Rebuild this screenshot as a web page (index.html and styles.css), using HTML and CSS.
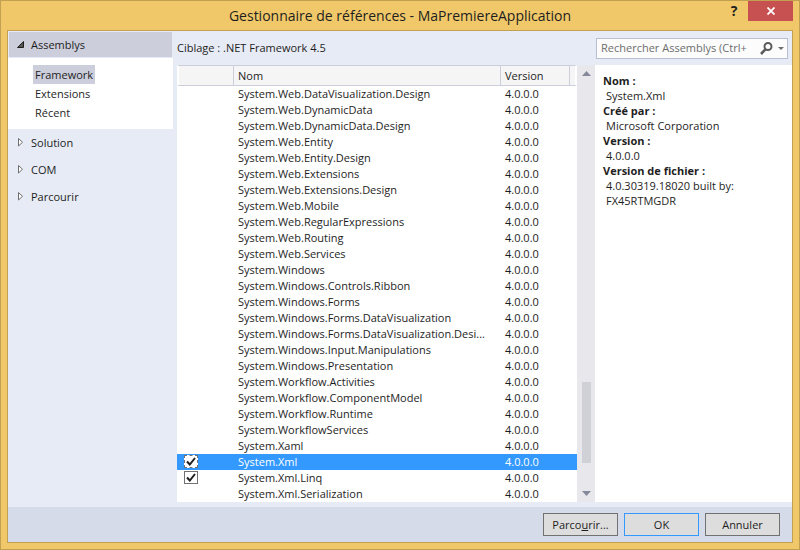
FILE: index.html
```html
<!DOCTYPE html>
<html lang="fr">
<head>
    <meta charset="UTF-8">
    <title>Gestionnaire de références - MaPremiereApplication</title>
    <link rel="stylesheet" href="styles.css">
</head>
<body>
    <div class="window">
        <header class="title-bar">
            <h1 class="title">Gestionnaire de références - MaPremiereApplication</h1>
            <div class="title-actions">
                <button class="help-btn" type="button" aria-label="Aide">?</button>
                <button class="close-btn" type="button" aria-label="Fermer">
                    <svg width="8" height="8" viewBox="0 0 8 8"><path d="M0.5 0.5L7.5 7.5M7.5 0.5L0.5 7.5" stroke="#fff" stroke-width="1.8"/></svg>
                </button>
            </div>
        </header>

        <div class="client">
            <div class="content">
                <nav class="sidebar">
                    <button class="section section-open" type="button">
                        <svg width="7" height="7" viewBox="0 0 7 7"><path d="M6.5 0.5V6.5H0.5Z" fill="#555" stroke="#1e1e1e"/></svg>
                        Assemblys
                    </button>
                    <ul class="sub-list">
                        <li><a class="sub-link active" href="#framework">Framework</a></li>
                        <li><a class="sub-link" href="#extensions">Extensions</a></li>
                        <li><a class="sub-link" href="#recent">Récent</a></li>
                    </ul>
                    <button class="section" type="button">
                        <svg width="7" height="9" viewBox="0 0 7 9"><path d="M1.5 0.5V8L5.5 4.25Z" fill="#fff" stroke="#6e6e6e"/></svg>
                        Solution
                    </button>
                    <button class="section" type="button">
                        <svg width="7" height="9" viewBox="0 0 7 9"><path d="M1.5 0.5V8L5.5 4.25Z" fill="#fff" stroke="#6e6e6e"/></svg>
                        COM
                    </button>
                    <button class="section" type="button">
                        <svg width="7" height="9" viewBox="0 0 7 9"><path d="M1.5 0.5V8L5.5 4.25Z" fill="#fff" stroke="#6e6e6e"/></svg>
                        Parcourir
                    </button>
                </nav>

                <main class="main">
                    <div class="toolbar">
                        <span class="target">Ciblage : .NET Framework 4.5</span>
                        <div class="search">
                            <input class="search-input" type="text" placeholder="Rechercher Assemblys (Ctrl+" aria-label="Rechercher Assemblys">
                            <button class="search-btn" type="button" aria-label="Rechercher">
                                <svg width="13" height="13" viewBox="0 0 13 13" fill="none" stroke="#5a5a5a"><circle cx="8" cy="4.5" r="3.5" stroke-width="2"/><path d="M5.4 7.4L1 12" stroke-width="2.6"/></svg>
                            </button>
                            <button class="search-btn" type="button" aria-label="Options de recherche">
                                <svg width="6" height="3" viewBox="0 0 6 3"><path d="M0 0H6L3 3Z" fill="#6e6e6e"/></svg>
                            </button>
                        </div>
                    </div>

                    <div class="panes">
                        <div class="list">
                            <table class="assemblies">
                                <colgroup>
                                    <col class="col-check">
                                    <col class="col-name">
                                    <col class="col-version">
                                    <col class="col-end">
                                </colgroup>
                                <thead>
                                    <tr><th></th><th>Nom</th><th>Version</th><th></th></tr>
                                </thead>
                                <tbody>
                                    <tr><td></td><td>System.Web.DataVisualization.Design</td><td>4.0.0.0</td><td></td></tr>
                                    <tr><td></td><td>System.Web.DynamicData</td><td>4.0.0.0</td><td></td></tr>
                                    <tr><td></td><td>System.Web.DynamicData.Design</td><td>4.0.0.0</td><td></td></tr>
                                    <tr><td></td><td>System.Web.Entity</td><td>4.0.0.0</td><td></td></tr>
                                    <tr><td></td><td>System.Web.Entity.Design</td><td>4.0.0.0</td><td></td></tr>
                                    <tr><td></td><td>System.Web.Extensions</td><td>4.0.0.0</td><td></td></tr>
                                    <tr><td></td><td>System.Web.Extensions.Design</td><td>4.0.0.0</td><td></td></tr>
                                    <tr><td></td><td>System.Web.Mobile</td><td>4.0.0.0</td><td></td></tr>
                                    <tr><td></td><td>System.Web.RegularExpressions</td><td>4.0.0.0</td><td></td></tr>
                                    <tr><td></td><td>System.Web.Routing</td><td>4.0.0.0</td><td></td></tr>
                                    <tr><td></td><td>System.Web.Services</td><td>4.0.0.0</td><td></td></tr>
                                    <tr><td></td><td>System.Windows</td><td>4.0.0.0</td><td></td></tr>
                                    <tr><td></td><td>System.Windows.Controls.Ribbon</td><td>4.0.0.0</td><td></td></tr>
                                    <tr><td></td><td>System.Windows.Forms</td><td>4.0.0.0</td><td></td></tr>
                                    <tr><td></td><td>System.Windows.Forms.DataVisualization</td><td>4.0.0.0</td><td></td></tr>
                                    <tr><td></td><td>System.Windows.Forms.DataVisualization.Desi...</td><td>4.0.0.0</td><td></td></tr>
                                    <tr><td></td><td>System.Windows.Input.Manipulations</td><td>4.0.0.0</td><td></td></tr>
                                    <tr><td></td><td>System.Windows.Presentation</td><td>4.0.0.0</td><td></td></tr>
                                    <tr><td></td><td>System.Workflow.Activities</td><td>4.0.0.0</td><td></td></tr>
                                    <tr><td></td><td>System.Workflow.ComponentModel</td><td>4.0.0.0</td><td></td></tr>
                                    <tr><td></td><td>System.Workflow.Runtime</td><td>4.0.0.0</td><td></td></tr>
                                    <tr><td></td><td>System.WorkflowServices</td><td>4.0.0.0</td><td></td></tr>
                                    <tr><td></td><td>System.Xaml</td><td>4.0.0.0</td><td></td></tr>
                                    <tr class="selected"><td><input class="check" type="checkbox" id="xml" checked></td><td><label for="xml">System.Xml</label></td><td>4.0.0.0</td><td></td></tr>
                                    <tr><td><input class="check" type="checkbox" id="linq" checked></td><td><label for="linq">System.Xml.Linq</label></td><td>4.0.0.0</td><td></td></tr>
                                    <tr><td></td><td>System.Xml.Serialization</td><td>4.0.0.0</td><td></td></tr>
                                </tbody>
                            </table>
                        </div>

                        <div class="scrollbar">
                            <svg width="9" height="5" viewBox="0 0 9 5"><path d="M0 5L4.5 0L9 5Z" fill="#868999"/></svg>
                            <div class="track"><div class="thumb"></div></div>
                            <svg width="9" height="5" viewBox="0 0 9 5"><path d="M0 0L4.5 5L9 0Z" fill="#868999"/></svg>
                        </div>

                        <dl class="details">
                            <dt>Nom :</dt>
                            <dd>System.Xml</dd>
                            <dt>Créé par :</dt>
                            <dd>Microsoft Corporation</dd>
                            <dt>Version :</dt>
                            <dd>4.0.0.0</dd>
                            <dt>Version de fichier :</dt>
                            <dd>4.0.30319.18020 built by:<br>FX45RTMGDR</dd>
                        </dl>
                    </div>
                </main>
            </div>

            <footer class="footer">
                <button class="btn" type="button">Parco<u>u</u>rir...</button>
                <button class="btn btn-default" type="button">OK</button>
                <button class="btn" type="button">Annuler</button>
            </footer>
        </div>
    </div>
</body>
</html>
```
FILE: styles.css
```css
:root {
    --frame: #f0c869;
    --frame-border: #c1a052;
    --panel: #e6ebf5;
    --footer: #d6dbe9;
    --active: #cccedb;
    --selection: #3399ff;
    --text: #1e1e1e;
}

* {
    box-sizing: border-box;
}

body {
    margin: 0;
    font-family: "Open Sans", "Noto Sans", sans-serif;
    font-size: 11px;
    line-height: 16px;
    color: var(--text);
}

button,
input {
    font: inherit;
    color: inherit;
}

button {
    padding: 0;
    border: none;
    background: none;
}

svg {
    display: block;
    flex-shrink: 0;
}

.window {
    display: flex;
    flex-direction: column;
    min-height: 100vh;
    padding: 0 6px 6px;
    border: 1px solid var(--frame-border);
    background-color: var(--frame);
}

/* Title bar */
.title-bar {
    display: grid;
    grid-template-columns: 1fr auto 1fr;
    height: 29px;
}

.title {
    grid-column: 2;
    margin: 0;
    font-size: 14px;
    font-weight: 400;
    line-height: 29px;
}

.title-actions {
    display: flex;
    justify-content: flex-end;
    align-items: flex-start;
}

.help-btn {
    width: 28px;
    height: 20px;
    font-size: 14px;
    font-weight: 700;
}

.close-btn {
    display: flex;
    justify-content: center;
    align-items: center;
    width: 45px;
    height: 20px;
    background-color: #c75050;
}

.client {
    display: flex;
    flex-direction: column;
    flex: 1;
    border: 1px solid var(--frame-border);
    background-color: var(--panel);
}

.content {
    display: flex;
    flex: 1;
    gap: 4px;
    padding-bottom: 5px;
}

/* Sidebar */
.sidebar {
    width: 165px;
}

.section {
    display: flex;
    align-items: center;
    gap: 7px;
    width: 100%;
    height: 27px;
    padding-left: 9px;
}

.section-open {
    border: 1px solid var(--panel);
    padding-left: 8px;
    background-color: var(--active);
}

.sub-list {
    display: flex;
    flex-direction: column;
    align-items: flex-start;
    margin: 0;
    padding: 7px 0 7px 25px;
    list-style: none;
    background-color: #fff;
}

.sub-link {
    display: block;
    padding: 0 2px;
    line-height: 19px;
    color: inherit;
    text-decoration: none;
}

.sub-link.active {
    background-color: var(--active);
}

/* Main area */
.main {
    display: flex;
    flex-direction: column;
    flex: 1;
}

.toolbar {
    display: flex;
    justify-content: space-between;
    align-items: center;
    height: 34px;
    padding-right: 4px;
}

.search {
    display: flex;
    align-items: center;
    gap: 5px;
    width: 192px;
    height: 21px;
    padding-right: 3px;
    border: 1px solid #b9bfd0;
    background-color: #fcfcfc;
}

.search-input {
    flex: 1;
    min-width: 0;
    padding: 0 0 0 4px;
    border: none;
    outline: none;
    background: none;
}

.search-input::placeholder {
    color: #6d6d6d;
}

.panes {
    display: flex;
    flex: 1;
}

.list {
    flex: 1;
    background-color: #fff;
}

.assemblies {
    width: 100%;
    table-layout: fixed;
    border-spacing: 0;
}

.col-check {
    width: 57px;
}

.col-version {
    width: 69px;
}

.col-end {
    width: 7px;
}

.assemblies th {
    height: 21px;
    padding: 0 4px;
    border: solid var(--active);
    border-width: 1px 1px 1px 0;
    background-color: #f5f5f5;
    font-weight: 400;
    text-align: left;
}

.assemblies th:first-child {
    border-left: 2px solid #fff;
}

.assemblies th:last-child {
    padding: 0;
    border-right: 2px solid #fff;
}

.assemblies td {
    height: 16px;
    padding: 0 4px;
    white-space: nowrap;
}

.assemblies td:first-child {
    padding: 1px 0 2px 7px;
}

.assemblies td:last-child {
    padding: 0;
}

.selected {
    background-color: var(--selection);
    color: #fff;
}

.check {
    appearance: none;
    display: block;
    width: 14px;
    height: 13px;
    margin: 0;
    border: 1px solid #717171;
    background: #fff url("data:image/svg+xml,%3Csvg xmlns='http://www.w3.org/2000/svg' viewBox='0 0 12 11'%3E%3Cpath d='M2 5.5L4.8 8.5L10 2' fill='none' stroke='%231e1e1e' stroke-width='2'/%3E%3C/svg%3E") center / 12px 11px no-repeat;
}

.selected .check {
    border-style: dashed;
}

/* Scrollbar */
.scrollbar {
    display: flex;
    flex-direction: column;
    align-items: center;
    width: 18px;
    padding: 6px 0;
    background-color: #e8e8ec;
}

.track {
    display: flex;
    flex-direction: column;
    justify-content: flex-end;
    flex: 1;
    padding-bottom: 28px;
}

.thumb {
    width: 9px;
    height: 81px;
    background-color: #d0d1d7;
}

/* Details */
.details {
    width: 197px;
    margin: 0;
    padding: 8px;
    line-height: 15px;
    background-color: #fff;
}

.details dt {
    font-weight: 700;
}

.details dd {
    margin: 0 0 0 3px;
}

/* Footer */
.footer {
    display: flex;
    justify-content: flex-end;
    gap: 6px;
    padding: 6px 12px;
    background-color: var(--footer);
}

.btn {
    width: 75px;
    height: 23px;
    border: 1px solid #717171;
    background-color: #dddddd;
}

.btn-default {
    border-color: var(--selection);
}
```
